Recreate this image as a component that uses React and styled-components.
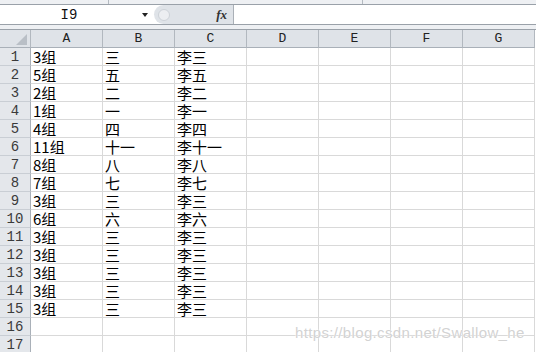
import React from 'react'
import styled, { createGlobalStyle } from 'styled-components'

const GlobalStyle = createGlobalStyle`
  html, body {
    margin: 0;
    padding: 0;
    background: #ffffff;
    overflow: hidden;
  }
`

const Page = styled.div`
  width: 536px;
  height: 352px;
  overflow: hidden;
  position: relative;
  background: #fff;
`

const TopStrip = styled.div`
  height: 4px;
  background: #eef0f3;
  border-bottom: 1px solid #9aa1a9;
  display: flex;
`

const StripCell = styled.div`
  width: ${p => p.w}px;
  border-right: 1px solid #b4bac1;
`

const FormulaBar = styled.div`
  height: 19px;
  display: flex;
  border-bottom: 1px solid #9aa1a9;
`

const NameBox = styled.div`
  width: 154px;
  background: #fff;
  display: flex;
  align-items: center;
`

const NameText = styled.span`
  width: 138px;
  text-align: center;
  font-family: "Liberation Mono", monospace;
  font-size: 14px;
  line-height: 14px;
  color: #111;
`

const DropArrow = styled.span`
  width: 0;
  height: 0;
  border-left: 3.5px solid transparent;
  border-right: 3.5px solid transparent;
  border-top: 4px solid #222;
  margin-left: 4px;
`

const Splitter = styled.div`
  width: 79px;
  background: #dfe3e8;
  border-right: 1px solid #aab0b7;
  border-radius: 10px 0 0 10px;
  display: flex;
  align-items: center;
`

const Grip = styled.span`
  width: 12px;
  height: 12px;
  margin-left: 4px;
  border-radius: 50%;
  background: #eceef1;
  border: 1px solid #cdd2d8;
  box-sizing: border-box;
`

const Fx = styled.span`
  margin-left: auto;
  margin-right: 6px;
  font-family: "Liberation Serif", serif;
  font-style: italic;
  font-weight: bold;
  font-size: 13px;
  line-height: 13px;
  color: #333;
`

const FormulaInput = styled.div`
  flex: 1;
  background: #fff;
`

const GapStrip = styled.div`
  height: 4px;
  background: #eef0f3;
  border-bottom: 1px solid #9aa1a9;
`

const Sheet = styled.div`
  display: grid;
  grid-template-columns: 31px repeat(7, 72px);
  grid-auto-rows: 18px;
`

const ColHead = styled.div`
  background: #dfe3e8;
  border-right: 1px solid #b2b8bf;
  border-bottom: 1px solid #a9b0b8;
  display: flex;
  align-items: center;
  justify-content: center;
  font-family: "Liberation Mono", monospace;
  font-size: 13px;
  line-height: 13px;
  color: #222;
`

const Corner = styled(ColHead)`
  justify-content: flex-end;
  align-items: flex-end;
  padding: 0 3px 2px 0;
  box-sizing: border-box;
`

const RowHead = styled.div`
  background: #e4e7eb;
  border-right: 1px solid #a9b0b8;
  border-bottom: 1px solid #c9ced4;
  display: flex;
  align-items: center;
  justify-content: center;
  font-family: "Liberation Mono", monospace;
  font-size: 14px;
  line-height: 14px;
  color: #3a3a3a;
`

const Cell = styled.div`
  border-right: 1px solid #d9d9d9;
  border-bottom: 1px solid #d9d9d9;
  padding-left: 2px;
  display: flex;
  align-items: center;
  font-family: "Noto Sans CJK SC", sans-serif;
  font-size: 15px;
  line-height: 15px;
  color: #000;
  white-space: nowrap;
`

const Watermark = styled.div`
  position: absolute;
  left: 295px;
  top: 325px;
  font-family: "Liberation Sans", sans-serif;
  font-size: 15px;
  line-height: 15px;
  letter-spacing: 0.35px;
  color: rgba(205, 205, 205, 0.9);
  text-shadow: 0 0 1px #fff, 0 0 2px #fff;
`

const columns = ['A', 'B', 'C', 'D', 'E', 'F', 'G']

const rows = [
  ['3组', '三', '李三'],
  ['5组', '五', '李五'],
  ['2组', '二', '李二'],
  ['1组', '一', '李一'],
  ['4组', '四', '李四'],
  ['11组', '十一', '李十一'],
  ['8组', '八', '李八'],
  ['7组', '七', '李七'],
  ['3组', '三', '李三'],
  ['6组', '六', '李六'],
  ['3组', '三', '李三'],
  ['3组', '三', '李三'],
  ['3组', '三', '李三'],
  ['3组', '三', '李三'],
  ['3组', '三', '李三'],
  [],
  [],
]

export default function App() {
  return (
    <Page>
      <GlobalStyle />
      <TopStrip>
        <StripCell w={108} />
        <StripCell w={253} />
      </TopStrip>
      <FormulaBar>
        <NameBox>
          <NameText>I9</NameText>
          <DropArrow />
        </NameBox>
        <Splitter>
          <Grip />
          <Fx>fx</Fx>
        </Splitter>
        <FormulaInput />
      </FormulaBar>
      <GapStrip />
      <Sheet>
        <Corner>
          <svg width="11" height="11" viewBox="0 0 11 11">
            <polygon points="11,0 11,11 0,11" fill="#b9bfc6" />
          </svg>
        </Corner>
        {columns.map(c => (
          <ColHead key={c}>{c}</ColHead>
        ))}
        {rows.map((r, i) => (
          <React.Fragment key={i}>
            <RowHead>{i + 1}</RowHead>
            {columns.map((c, j) => (
              <Cell key={c}>{r[j] || ''}</Cell>
            ))}
          </React.Fragment>
        ))}
      </Sheet>
      <Watermark>https://blog.csdn.net/Swallow_he</Watermark>
    </Page>
  )
}
